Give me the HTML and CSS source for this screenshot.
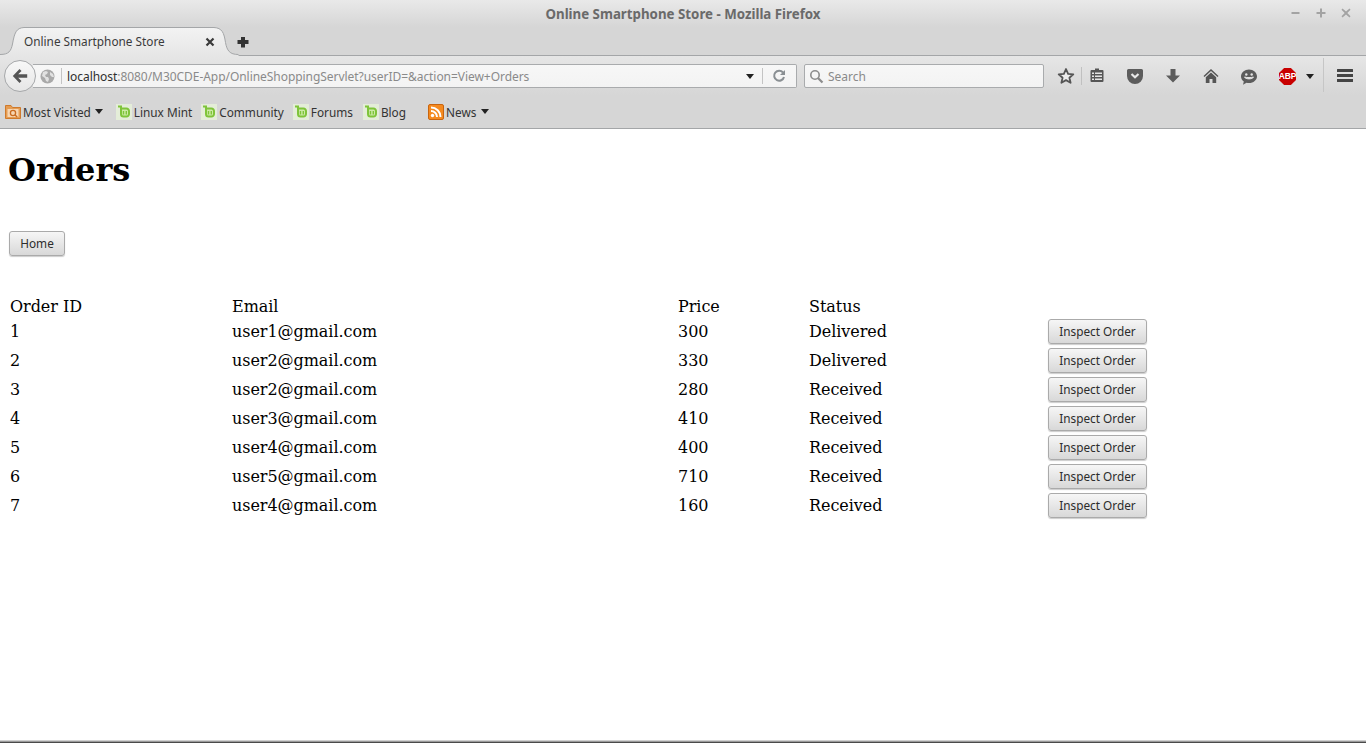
FILE: index.html
```html
<!DOCTYPE html>
<html lang="en">
<head>
<meta charset="utf-8">
<title>Online Smartphone Store</title>
<link rel="stylesheet" href="styles.css">
</head>
<body>
<div class="chrome">
  <header class="titlebar">
    <span></span>
    <span class="title">Online Smartphone Store - Mozilla Firefox</span>
    <div class="winctl">
      <svg width="12" height="12" viewBox="0 0 12 12"><rect x="1.500" y="5" width="8" height="2" fill="#a3a3a3"/></svg>
      <svg width="12" height="12" viewBox="0 0 12 12"><path d="M5 1.500h2V5h3.500v2H7v3.500H5V7H1.500V5H5z" fill="#a3a3a3"/></svg>
      <svg width="12" height="12" viewBox="0 0 12 12"><path d="M2.500 1.500L6 4.500l3.500-3 1 1.200L7.300 6l3.200 3.300-1 1.200L6 7.500l-3.500 3-1-1.200L4.700 6 1.500 2.700z" fill="#a3a3a3"/></svg>
    </div>
  </header>
  <div class="tabstrip">
    <div class="tab">
      <svg class="tabshape" width="240" height="29" viewBox="0 0 240 29"><defs><linearGradient id="tg" x1="0" y1="0" x2="0" y2="1"><stop offset="0" stop-color="#f3f3f3"/><stop offset="1" stop-color="#e6e6e6"/></linearGradient></defs><path d="M0 27.500C9 27.500 11 24 12.500 17 14.500 6 16 1 24 .5H214c8 .5 10 5 11.500 15 1.500 8 4 12 13 12V29H0z" fill="url(#tg)"/><path d="M0 27.500C9 27.500 11 24 12.500 17 14.500 6 16 1 24 .5H214c8 .5 10 5 11.500 15 1.500 8 4 12 13 12" fill="none" stroke="#a4a6a8"/></svg>
      <span class="tablabel">Online Smartphone Store</span>
      <svg class="tabclose" width="10" height="10" viewBox="0 0 10 10"><path d="M1.500 1.500l7 7M8.500 1.500l-7 7" stroke="#3a3a3a" stroke-width="2.200"/></svg>
    </div>
    <svg class="newtab" width="12" height="12" viewBox="0 0 12 12"><path d="M4 1h4v3h3.500v4H8v3.500H4V8H.5V4H4z" fill="#333"/></svg>
  </div>
  <nav class="navbar">
    <div class="back">
      <svg width="16" height="16" viewBox="0 0 16 16"><path d="M7.500 1L.8 8l6.700 7 2-2-3.300-3.300H15.200V6.300H6.200L9.500 3z" fill="#555"/></svg>
    </div>
    <div class="urlbar">
      <svg class="globe" width="15" height="15" viewBox="0 0 15 15"><circle cx="7.500" cy="7.500" r="7" fill="#a9a9a9"/><path d="M3 3l3-1 2 1-1 2-2 1 1 2 2 0 1 2-1 3-2-1-1-3-3-2zM10 3l3 2 1 3-2 0-2-2z" fill="#e1e1e1"/></svg>
      <span class="urlsep"></span>
      <span class="urltext"><span class="host">localhost</span>:8080/M30CDE-App/OnlineShoppingServlet?userID=&amp;action=View+Orders</span>
      <span class="ddarrow urlarrow"></span>
      <span class="urlsep2"></span>
      <svg class="reload" width="14" height="14" viewBox="0 0 14 14"><path d="M11 3.500A5 5 0 1 0 12 8" fill="none" stroke="#8a8f93" stroke-width="2"/><path d="M8 6h5V1z" fill="#8a8f93"/></svg>
    </div>
    <div class="searchbar">
      <svg width="15" height="15" viewBox="0 0 15 15"><circle cx="6" cy="6" r="4.200" fill="none" stroke="#8c8c8c" stroke-width="1.600"/><path d="M9 9l4.500 4.500" stroke="#8c8c8c" stroke-width="2.200"/></svg>
      <span>Search</span>
    </div>
    <div class="tools">
      <svg class="t-star" width="18" height="18" viewBox="0 0 18 18"><path d="M9 2l2.100 4.800 5.200.5-3.900 3.400 1.200 5.100L9 13.100 4.400 15.800l1.200-5.100L1.700 7.300l5.200-.5z" fill="#eee" stroke="#555" stroke-width="1.800" stroke-linejoin="round"/></svg>
      <span class="t-sep"></span>
      <svg class="t-clip" width="16" height="16" viewBox="0 0 16 16"><path d="M6 1.500h4V3h3.500a1 1 0 0 1 1 1v10a1 1 0 0 1-1 1h-11a1 1 0 0 1-1-1V4a1 1 0 0 1 1-1H6z" fill="#555"/><path d="M3 5.500h2v1.500H3zM6 5.500h7v1.500H6zM3 8.500h2v1.500H3zM6 8.500h7v1.500H6zM3 11.500h2v1.500H3zM6 11.500h7v1.500H6z" fill="#e4e4e4"/></svg>
      <svg class="t-pocket" width="16" height="15" viewBox="0 0 16 15"><path d="M1.500 0h13A1.500 1.500 0 0 1 16 1.500V7a8 8 0 0 1-16 0V1.500A1.500 1.500 0 0 1 1.500 0z" fill="#5c5c5c"/><path d="M4.500 5L8 8.300 11.500 5" fill="none" stroke="#e8e8e8" stroke-width="2.200"/></svg>
      <svg class="t-down" width="16" height="16" viewBox="0 0 16 16"><path d="M5.500 1h5v6.500H15L8 14.500 1 7.500h4.500z" fill="#5c5c5c"/></svg>
      <svg class="t-home" width="16" height="16" viewBox="0 0 16 16"><path d="M8 1L0.500 8l1 1L8 3l6.500 6 1-1z" fill="#555"/><path d="M8 4.500L2.800 9.300V15h3.700v-4h3v4h3.700V9.300z" fill="#555"/></svg>
      <svg class="t-smile" width="16" height="16" viewBox="0 0 16 16"><path d="M8 .5c4.400 0 8 3 8 6.800s-3.600 6.800-8 6.800c-.9 0-1.700-.1-2.500-.3L2 15.800l.8-3.200C1 11.300 0 9.400 0 7.300 0 3.500 3.600.5 8 .5z" fill="#5c5c5c"/><circle cx="5.300" cy="5.500" r="1.200" fill="#e4e4e4"/><circle cx="10.700" cy="5.500" r="1.200" fill="#e4e4e4"/><path d="M3.500 8c1 2.500 8 2.500 9 0-2.500.8-6.500.8-9 0z" fill="#e4e4e4" stroke="#e4e4e4"/></svg>
      <div class="abp"><span>ABP</span></div>
      <span class="ddarrow t-arrow"></span>
      <span class="t-sep2"></span>
      <svg class="t-menu" width="16" height="13" viewBox="0 0 16 13"><path d="M.5 0h15a.5.5 0 0 1 .5.500V3H0V.5a.5.5 0 0 1 .5-.5zM0 5h16v3H0zM0 10h16v2.500a.5.5 0 0 1-.5.5H.5a.5.5 0 0 1-.5-.5z" fill="#444"/></svg>
    </div>
  </nav>
  <div class="bookmarks">
    <a class="bm b1"><svg width="16" height="16" viewBox="0 0 16 16"><path d="M.5 1.500h5.500l1.500 2h8V14.500H.5z" fill="#e59c52" stroke="#cf7a2c"/><rect x="2.500" y="5" width="11" height="8" fill="#f7d6b2"/><circle cx="8" cy="9" r="2.600" fill="none" stroke="#c96c22" stroke-width="1.300"/><path d="M10 11l2.200 2" stroke="#c96c22" stroke-width="1.500"/></svg>Most Visited<span class="ddarrow"></span></a>
    <a class="bm b2"><svg width="16" height="16" viewBox="0 0 16 16"><use href="#mintlogo"/></svg>Linux Mint</a>
    <a class="bm b3"><svg width="16" height="16" viewBox="0 0 16 16"><use href="#mintlogo"/></svg>Community</a>
    <a class="bm b4"><svg width="16" height="16" viewBox="0 0 16 16"><use href="#mintlogo"/></svg>Forums</a>
    <a class="bm b5"><svg width="16" height="16" viewBox="0 0 16 16"><use href="#mintlogo"/></svg>Blog</a>
    <a class="bm b6"><svg width="16" height="16" viewBox="0 0 16 16"><rect x=".5" y=".5" width="15" height="15" rx="1.500" fill="#f58a1f" stroke="#c9650f"/><circle cx="4.500" cy="11.500" r="1.700" fill="#fff"/><path d="M3 7a6 6 0 0 1 6 6M3 3.500A9.500 9.500 0 0 1 12.500 13" fill="none" stroke="#fff" stroke-width="2"/></svg>News<span class="ddarrow"></span></a>
  </div>
</div>
<svg class="defs" width="0" height="0"><defs><g id="mintlogo"><rect width="16" height="16" fill="#e4edd8"/><path d="M2 2.500H5V10a2.500 2.500 0 0 0 2.500 2.500h3A2.500 2.500 0 0 0 13 10V7a2.500 2.500 0 0 0-2.500-2.500H6" fill="#cdeba6" stroke="#7fc43a" stroke-width="2"/><path d="M7.500 10.500V7M10.300 10.500V7" stroke="#7fc43a" stroke-width="1.400"/></g></defs></svg>
<main class="page">
  <h1>Orders</h1>
  <button class="btn home">Home</button>
  <table class="orders">
    <thead>
      <tr><td class="c1">Order ID</td><td class="c2">Email</td><td class="c3">Price</td><td class="c4">Status</td><td></td></tr>
    </thead>
    <tbody>
      <tr><td>1</td><td>user1@gmail.com</td><td>300</td><td>Delivered</td><td><button class="btn">Inspect Order</button></td></tr>
      <tr><td>2</td><td>user2@gmail.com</td><td>330</td><td>Delivered</td><td><button class="btn">Inspect Order</button></td></tr>
      <tr><td>3</td><td>user2@gmail.com</td><td>280</td><td>Received</td><td><button class="btn">Inspect Order</button></td></tr>
      <tr><td>4</td><td>user3@gmail.com</td><td>410</td><td>Received</td><td><button class="btn">Inspect Order</button></td></tr>
      <tr><td>5</td><td>user4@gmail.com</td><td>400</td><td>Received</td><td><button class="btn">Inspect Order</button></td></tr>
      <tr><td>6</td><td>user5@gmail.com</td><td>710</td><td>Received</td><td><button class="btn">Inspect Order</button></td></tr>
      <tr><td>7</td><td>user4@gmail.com</td><td>160</td><td>Received</td><td><button class="btn">Inspect Order</button></td></tr>
    </tbody>
  </table>
</main>
<div class="bottomedge"></div>
</body>
</html>
```
FILE: styles.css
```css
html, body { margin: 0; padding: 0; height: 743px; overflow: hidden; }
body { display: flex; flex-direction: column; background: #fff; font-family: "DejaVu Serif", serif; color: #000; }
.chrome { flex: none; font-family: "Noto Sans", sans-serif; font-size: 12px; color: #333; background: #d6d6d6; }
.defs { position: absolute; }

.titlebar { height: 27px; display: grid; grid-template-columns: 1fr auto 1fr; align-items: center; background: linear-gradient(#e9e9e9, #d6d6d6); }
.title { font-weight: 700; font-size: 13.3px; color: #6a6a6a; padding-top: 1px; }
.winctl { display: flex; justify-content: flex-end; gap: 13px; padding: 0 14px 0 0; margin-top: -2px; }

.tabstrip { height: 29px; box-sizing: border-box; border-bottom: 1px solid #a4a6a8; display: flex; align-items: center; position: relative; }
.tab { width: 228px; height: 28px; display: flex; align-items: center; position: relative; }
.tabshape { position: absolute; left: 0; top: 0; }
.tablabel { position: relative; margin-left: 24px; font-size: 11.8px; color: #3a3a3a; }
.tabclose { position: absolute; left: 205px; top: 10px; }
.newtab { margin-left: 9px; margin-top: 1px; }

.navbar { height: 39px; display: flex; align-items: center; background: linear-gradient(#e6e6e6, #d6d6d6); padding-left: 33px; position: relative; box-sizing: border-box; }
.back { position: absolute; z-index: 1; left: 4px; top: 4px; width: 30px; height: 30px; border: 1px solid #a6a8aa; border-radius: 50%; background: linear-gradient(#f8f8f8, #e6e6e6); display: flex; align-items: center; justify-content: center; }
.urlbar { width: 764px; height: 24px; box-sizing: border-box; margin-top: 1px; border: 1px solid #a9abad; border-left: 0; border-radius: 0 2px 2px 0; background: linear-gradient(#f7f7f7, #f3f3f3); display: flex; align-items: center; font-size: 12px; color: #8a8a8a; }
.globe { margin-left: 7px; flex: none; }
.urlsep { width: 1px; height: 16px; background: #c4c4c4; margin: 0 5px 0 6px; flex: none; }
.urltext { flex: 1; white-space: nowrap; letter-spacing: -.05px; }
.host { color: #2f2f2f; }
.ddarrow { display: inline-block; width: 0; height: 0; border: 4.500px solid transparent; border-top: 5px solid #222; border-bottom: 0; }
.urlarrow { margin-right: 8px; }
.urlsep2 { width: 1px; height: 16px; background: #c4c4c4; flex: none; }
.reload { margin: 0 10px 0 9px; flex: none; }
.searchbar { width: 240px; height: 24px; box-sizing: border-box; margin: 1px 0 0 7px; border: 1px solid #a9abad; border-radius: 2px; background: linear-gradient(#f7f7f7, #f3f3f3); display: flex; align-items: center; gap: 4px; padding-left: 4px; font-size: 12px; color: #8a8a8a; }
.tools { position: relative; flex: 1; height: 100%; }
.tools > * { position: absolute; }
.t-star { left: 13px; top: 11px; }
.t-sep { left: 37px; top: 11px; width: 1px; height: 18px; background: #c0c0c0; }
.t-clip { left: 45px; top: 11px; }
.t-pocket { left: 83px; top: 13px; }
.t-down { left: 121px; top: 12px; }
.t-home { left: 159px; top: 12px; }
.t-smile { left: 197px; top: 13px; }
.abp { left: 235px; top: 12px; width: 17px; height: 17px; background: #c80000; clip-path: polygon(30% 0, 70% 0, 100% 30%, 100% 70%, 70% 100%, 30% 100%, 0 70%, 0 30%); display: flex; align-items: center; justify-content: center; }
.abp span { font: 700 8.500px/1 "Liberation Sans", sans-serif; color: #fff; letter-spacing: -.2px; }
.t-arrow { left: 262px; top: 18px; }
.t-sep2 { left: 279px; top: 2px; width: 1px; height: 34px; background: #c6c6c6; }
.t-menu { left: 293px; top: 13px; }

.bookmarks { height: 34px; box-sizing: border-box; border-bottom: 1px solid #a4a6a8; display: flex; align-items: center; padding-left: 5px; font-size: 11.8px; color: #333; background: #d6d6d6; }
.bm { display: flex; align-items: center; gap: 2px; white-space: nowrap; }
.bm svg { flex: none; }
.bm .ddarrow { margin-left: 2px; }
.b2 { margin-left: 13px; }
.b3 { margin-left: 9px; }
.b4 { margin-left: 9px; }
.b5 { margin-left: 10px; }
.b6 { margin-left: 22px; }
.b6 .ddarrow { margin-left: 3px; }

.page { flex: 1; padding: 0 8px; min-height: 0; }
h1 { font: 700 32px/38px "DejaVu Serif", serif; margin: 22px 0 42px; }
.btn { display: block; font: 11.8px "Noto Sans", sans-serif; color: #2c2c2c; height: 25px; box-sizing: border-box; padding: 0 0 2px; white-space: nowrap; border: 1px solid #aaa; border-radius: 3px; background: linear-gradient(#f6f6f6, #d8d8d8); box-shadow: 0 1px 1px rgba(0,0,0,.2); }
.home { margin-left: 1px; width: 56px; }
.orders { margin-top: 38px; border-collapse: separate; border-spacing: 2px; font-size: 16px; line-height: 19px; letter-spacing: -.05px; table-layout: fixed; width: 1140px; }
.orders td { padding: 0; height: 20px; }
.orders tbody td { height: 27px; }
.c1 { width: 220px; }
.c2 { width: 444px; }
.c3 { width: 129px; }
.c4 { width: 237px; }
.orders .btn { width: 99px; }
.bottomedge { flex: none; height: 3px; background: linear-gradient(#d0d0d0 33%, #9a9a9a 33%, #9a9a9a 66%, #4a4a4a 66%); }
```
